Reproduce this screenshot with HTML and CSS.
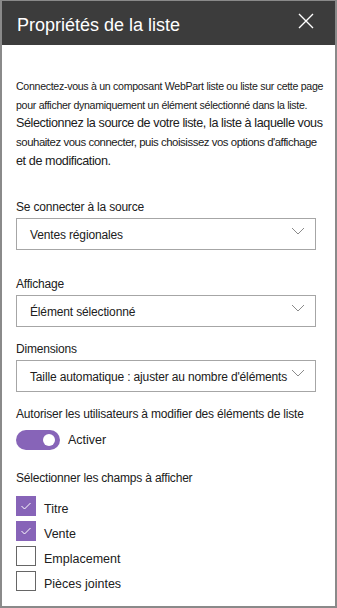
FILE: index.html
```html
<!DOCTYPE html>
<html lang="fr">
<head>
    <meta charset="UTF-8">
    <meta name="viewport" content="width=device-width, initial-scale=1.0">
    <title>Propriétés de la liste</title>
    <link rel="stylesheet" href="styles.css">
</head>
<body>
    <div class="panel">
        <div class="panel-header">
            <h1>Propriétés de la liste</h1>
            <button class="close" aria-label="Fermer">
                <svg width="16" height="16" viewBox="0 0 16 16">
                    <path d="M1 1 L15 15 M15 1 L1 15" stroke="#fff" stroke-width="1.4" fill="none"/>
                </svg>
            </button>
        </div>

        <div class="panel-body">
            <p class="intro">
                <span class="line small">Connectez-vous à un composant WebPart liste ou liste sur cette page</span>
                <span class="line small">pour afficher dynamiquement un élément sélectionné dans la liste.</span>
                <span class="line large">Sélectionnez la source de votre liste, la liste à laquelle vous</span>
                <span class="line medium">souhaitez vous connecter, puis choisissez vos options d'affichage</span>
                <span class="line large">et de modification.</span>
            </p>

            <div class="field first">
                <div class="label">Se connecter à la source</div>
                <div class="dropdown">
                    <span>Ventes régionales</span>
                    <svg class="chevron" width="14" height="8" viewBox="0 0 14 8"><polyline points="1,1 7,7 13,1" fill="none" stroke="#8a8a8a" stroke-width="1"/></svg>
                </div>
            </div>

            <div class="field second">
                <div class="label">Affichage</div>
                <div class="dropdown">
                    <span>Élément sélectionné</span>
                    <svg class="chevron" width="14" height="8" viewBox="0 0 14 8"><polyline points="1,1 7,7 13,1" fill="none" stroke="#8a8a8a" stroke-width="1"/></svg>
                </div>
            </div>

            <div class="field">
                <div class="label">Dimensions</div>
                <div class="dropdown">
                    <span>Taille automatique : ajuster au nombre d'éléments</span>
                    <svg class="chevron" width="14" height="8" viewBox="0 0 14 8"><polyline points="1,1 7,7 13,1" fill="none" stroke="#8a8a8a" stroke-width="1"/></svg>
                </div>
            </div>

            <div class="field">
                <div class="label">Autoriser les utilisateurs à modifier des éléments de liste</div>
                <div class="toggle-row">
                    <span class="toggle"><span class="knob"></span></span>
                    <span>Activer</span>
                </div>
            </div>

            <div class="field fields-list">
                <div class="label">Sélectionner les champs à afficher</div>
                <div class="checks">
                    <div class="check-row">
                        <span class="box checked"><svg width="20" height="20" viewBox="0 0 20 20"><polyline points="5.5,10 8.5,13 14.5,7" fill="none" stroke="#fff" stroke-width="1"/></svg></span>
                        <span class="check-label">Titre</span>
                    </div>
                    <div class="check-row">
                        <span class="box checked"><svg width="20" height="20" viewBox="0 0 20 20"><polyline points="5.5,10 8.5,13 14.5,7" fill="none" stroke="#fff" stroke-width="1"/></svg></span>
                        <span class="check-label">Vente</span>
                    </div>
                    <div class="check-row">
                        <span class="box"></span>
                        <span class="check-label">Emplacement</span>
                    </div>
                    <div class="check-row">
                        <span class="box"></span>
                        <span class="check-label">Pièces jointes</span>
                    </div>
                </div>
            </div>
        </div>
    </div>
</body>
</html>
```

FILE: styles.css
```css
body {
    margin: 0;
    font-family: 'Liberation Sans', Arial, sans-serif;
    color: #202020;
    background-color: #fff;
}

.panel {
    width: 337px;
    height: 608px;
    box-sizing: border-box;
    border: 2px solid #8a8a8a;
    border-top-width: 1px;
    overflow: hidden;
}

.panel-header {
    height: 44px;
    background-color: #3c3c3c;
    display: flex;
    align-items: center;
    justify-content: space-between;
    padding: 0 21px 0 16px;
    margin-left: -1px;
}

.panel-header h1 {
    margin: 0;
    color: #fff;
    font-weight: normal;
    font-size: 18px;
    padding-top: 4px;
}

.close {
    background: none;
    border: none;
    padding: 0;
    width: 16px;
    height: 16px;
    margin-top: -4px;
    cursor: pointer;
}

.close svg {
    display: block;
}

.panel-body {
    padding: 32px 19px 0 14px;
}

.intro {
    margin: 0;
    line-height: 18.7px;
}

.intro .line {
    display: block;
    white-space: nowrap;
}

.intro .small {
    font-size: 10.6px;
    letter-spacing: -0.3px;
}

.intro .medium {
    font-size: 11.4px;
    letter-spacing: -0.45px;
}

.intro .large {
    font-size: 12.6px;
    letter-spacing: -0.4px;
}

.field {
    margin-top: 13px;
}

.field.first {
    margin-top: 27px;
}

.field.second {
    margin-top: 25px;
}

.label {
    font-size: 12px;
    letter-spacing: -0.2px;
    line-height: 18px;
    white-space: nowrap;
}

.dropdown {
    margin-top: 2px;
    height: 32px;
    box-sizing: border-box;
    border: 1px solid #a6a6a6;
    display: flex;
    align-items: center;
    justify-content: space-between;
    padding: 2px 10px 0 13px;
    font-size: 12px;
    letter-spacing: -0.15px;
    white-space: nowrap;
}

.chevron {
    flex-shrink: 0;
    margin-top: -8px;
}

.toggle-row {
    display: flex;
    align-items: center;
    gap: 8px;
    margin-top: 7px;
    font-size: 12.5px;
}

.toggle {
    width: 44px;
    height: 20px;
    border-radius: 10px;
    background-color: #8764b8;
    display: flex;
    align-items: center;
    justify-content: flex-end;
    padding: 0 5px;
    box-sizing: border-box;
}

.knob {
    width: 12px;
    height: 12px;
    border-radius: 50%;
    background-color: #fff;
}

.fields-list {
    margin-top: 19px;
}

.checks {
    margin-top: 9px;
    display: flex;
    flex-direction: column;
    gap: 5px;
}

.check-row {
    display: flex;
    align-items: center;
    font-size: 12.5px;
}

.box {
    width: 20px;
    height: 20px;
    box-sizing: border-box;
    border: 1px solid #666;
    flex-shrink: 0;
}

.box.checked {
    background-color: #8764b8;
    border-color: #8764b8;
}

.box svg {
    display: block;
    margin: -1px;
}

.check-label {
    margin-left: 8px;
    padding-top: 6px;
}
```
